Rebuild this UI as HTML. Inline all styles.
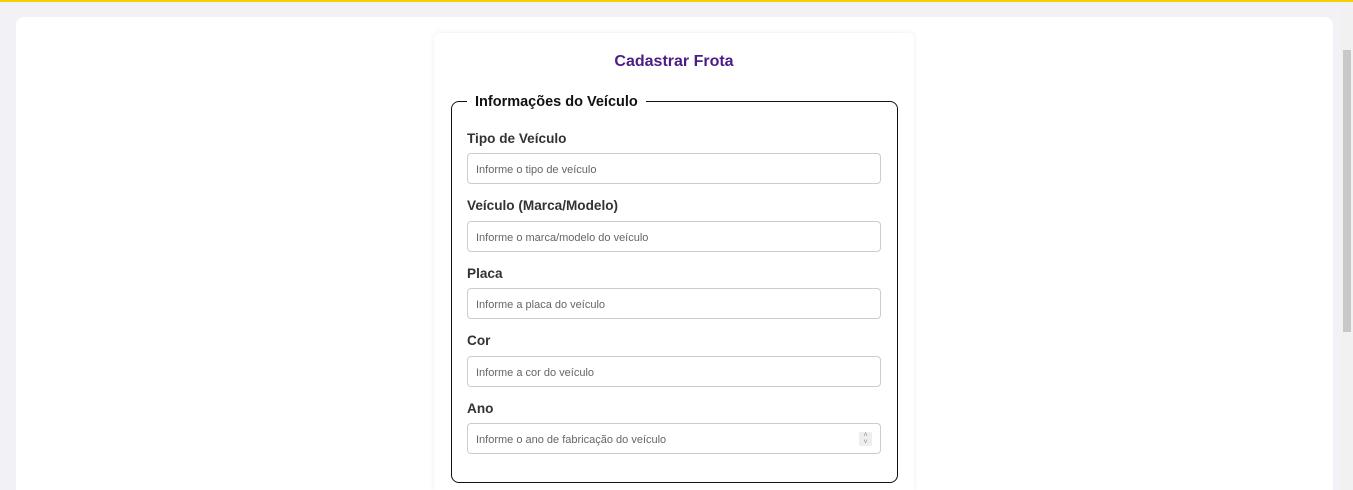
<!DOCTYPE html>
<html><head><meta charset="utf-8"><style>
*{box-sizing:border-box;margin:0;padding:0}
html,body{width:1353px;height:490px;overflow:hidden}
body{background:#f2f2f6;font-family:"Liberation Sans",sans-serif;position:relative}
.top{position:absolute;left:0;top:0;width:1353px;height:2px;background:#f5d000}
.outer{position:absolute;left:16px;top:17px;width:1317px;height:473px;background:#fff;border-radius:8px 8px 0 0}
.sb{position:absolute;left:1341px;top:2px;width:12px;height:488px;background:#f1f1f1}
.sb div{position:absolute;left:2px;top:48px;width:8px;height:282px;background:#c8c8c8}
.card{position:absolute;left:434px;top:33px;width:480px;height:457px;background:#fff;border-radius:6px 6px 0 0;box-shadow:0 0 6px rgba(0,0,0,.08)}
h1{position:absolute;left:0;width:480px;top:20px;text-align:center;font-size:16px;color:#4b1d85;font-weight:bold}
.fs{position:absolute;left:451px;top:101px;width:447px;height:382px;border:1px solid #111;border-radius:8px}
.lg{position:absolute;left:467px;top:94px;background:#fff;padding:0 8px;font-size:14.5px;font-weight:bold;color:#111;line-height:17px}
.lb{position:absolute;left:467px;font-size:13.6px;font-weight:bold;color:#333}
.in{position:absolute;left:467px;width:414px;height:31px;border:1px solid #ccc;border-radius:4px;font-size:11px;color:#666;padding-left:8px;line-height:32px}
.sp{position:absolute;right:8px;top:8px;width:13px;height:14px;background:#eee;border-radius:2px;font-size:7px;color:#888;text-align:center;line-height:7px}
</style></head><body>
<div class="top"></div>
<div class="outer"></div>
<div class="sb"><div></div></div>
<div class="card"><h1>Cadastrar Frota</h1></div>
<div class="fs"></div>
<div class="lg">Informações do Veículo</div>
<div class="lb" style="top:131px">Tipo de Veículo</div>
<div class="in" style="top:153px">Informe o tipo de veículo</div>
<div class="lb" style="top:198px">Veículo (Marca/Modelo)</div>
<div class="in" style="top:221px">Informe o marca/modelo do veículo</div>
<div class="lb" style="top:266px">Placa</div>
<div class="in" style="top:288px">Informe a placa do veículo</div>
<div class="lb" style="top:333px">Cor</div>
<div class="in" style="top:356px">Informe a cor do veículo</div>
<div class="lb" style="top:401px">Ano</div>
<div class="in" style="top:423px">Informe o ano de fabricação do veículo<div class="sp">˄<br>˅</div></div>
</body></html>
